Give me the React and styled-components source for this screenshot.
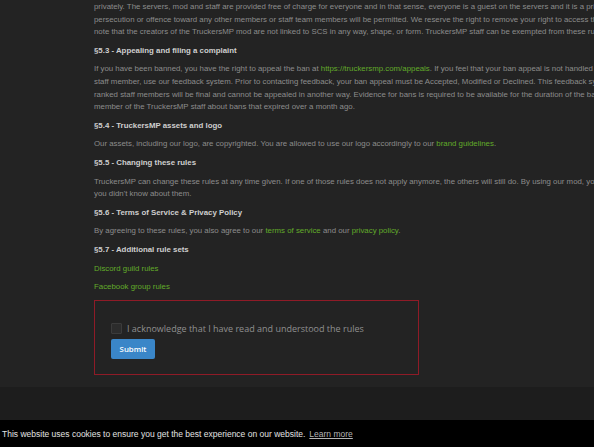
import React from 'react';
import styled, { createGlobalStyle } from 'styled-components';

const GlobalStyle = createGlobalStyle`
  html, body {
    margin: 0;
    padding: 0;
    background: #1d1d1d;
    overflow: hidden;
  }
`;

const Page = styled.div`
  width: 594px;
  height: 447px;
  overflow: hidden;
  position: relative;
`;

const RulesSection = styled.div`
  background: #232323;
  padding: 1px 0 12px 94px;
  font-family: "Liberation Sans", Arial, sans-serif;
`;

const Paragraph = styled.p`
  margin: 0 0 6px;
  font-size: 7.85px;
  line-height: 12.6px;
  color: #8c8c8c;
  white-space: nowrap;
`;

const Heading = styled.h4`
  margin: 0 0 6px;
  font-size: 7.85px;
  line-height: 12.6px;
  font-weight: bold;
  color: #cfcfcf;
`;

const GreenLink = styled.a`
  color: #62ab2a;
  text-decoration: none;
`;

const ConfirmBox = styled.div`
  margin-top: 5px;
  width: 325px;
  box-sizing: border-box;
  border: 1px solid #8f1b27;
  padding: 22px 16px 15px;
  display: flex;
  flex-direction: column;
  align-items: flex-start;
  gap: 4px;
  font-family: "Open Sans", sans-serif;
`;

const CheckRow = styled.label`
  display: flex;
  align-items: center;
  gap: 5px;
  height: 12px;
  font-size: 9px;
  color: #909090;
`;

const CheckSquare = styled.span`
  width: 11px;
  height: 11px;
  border-radius: 1px;
  background: #2c2c2c;
  border: 1px solid #3b3b3b;
  box-sizing: border-box;
`;

const SubmitButton = styled.button`
  width: 44px;
  height: 20px;
  border: none;
  border-radius: 2px;
  background: #3a86c8;
  color: #fff;
  font-family: "Open Sans", sans-serif;
  font-size: 7.8px;
  font-weight: 600;
  padding: 0;
`;

const FooterGap = styled.div`
  height: 35px;
  background: #1d1d1d;
`;

const CookieBar = styled.div`
  position: absolute;
  left: 0;
  right: 0;
  bottom: 0;
  height: 27px;
  background: #000;
  display: flex;
  align-items: center;
  padding-left: 2px;
  font-family: "Liberation Sans", Arial, sans-serif;
  font-size: 8.5px;
  color: #e2e2e2;
  white-space: nowrap;
`;

const LearnMore = styled.a`
  margin-left: 4px;
  color: #b5b5b5;
  text-decoration: underline;
`;

export default function App() {
  return (
    <Page>
      <GlobalStyle />
      <RulesSection>
        <Paragraph>
          privately. The servers, mod and staff are provided free of charge for everyone and in that sense, everyone is a guest on the servers and it is a privilege to play.<br />
          persecution or offence toward any other members or staff team members will be permitted. We reserve the right to remove your right to access the services.<br />
          note that the creators of the TruckersMP mod are not linked to SCS in any way, shape, or form. TruckersMP staff can be exempted from these rules.
        </Paragraph>

        <Heading>§5.3 - Appealing and filing a complaint</Heading>
        <Paragraph>
          If you have been banned, you have the right to appeal the ban at <GreenLink href="#">https://truckersmp.com/appeals</GreenLink>. If you feel that your ban appeal is not handled correctly,<br />
          staff member, use our feedback system. Prior to contacting feedback, your ban appeal must be Accepted, Modified or Declined. This feedback system<br />
          ranked staff members will be final and cannot be appealed in another way. Evidence for bans is required to be available for the duration of the ban.<br />
          member of the TruckersMP staff about bans that expired over a month ago.
        </Paragraph>

        <Heading>§5.4 - TruckersMP assets and logo</Heading>
        <Paragraph>
          Our assets, including our logo, are copyrighted. You are allowed to use our logo accordingly to our <GreenLink href="#">brand guidelines</GreenLink>.
        </Paragraph>

        <Heading>§5.5 - Changing these rules</Heading>
        <Paragraph>
          TruckersMP can change these rules at any time given. If one of those rules does not apply anymore, the others will still do. By using our mod, you agree<br />
          you didn't know about them.
        </Paragraph>

        <Heading>§5.6 - Terms of Service &amp; Privacy Policy</Heading>
        <Paragraph>
          By agreeing to these rules, you also agree to our <GreenLink href="#">terms of service</GreenLink> and our <GreenLink href="#">privacy policy</GreenLink>.
        </Paragraph>

        <Heading>§5.7 - Additional rule sets</Heading>
        <Paragraph><GreenLink href="#">Discord guild rules</GreenLink></Paragraph>
        <Paragraph><GreenLink href="#">Facebook group rules</GreenLink></Paragraph>

        <ConfirmBox>
          <CheckRow>
            <CheckSquare />
            I acknowledge that I have read and understood the rules
          </CheckRow>
          <SubmitButton>Submit</SubmitButton>
        </ConfirmBox>
      </RulesSection>
      <FooterGap />
      <CookieBar>
        This website uses cookies to ensure you get the best experience on our website.
        <LearnMore href="#">Learn more</LearnMore>
      </CookieBar>
    </Page>
  );
}
